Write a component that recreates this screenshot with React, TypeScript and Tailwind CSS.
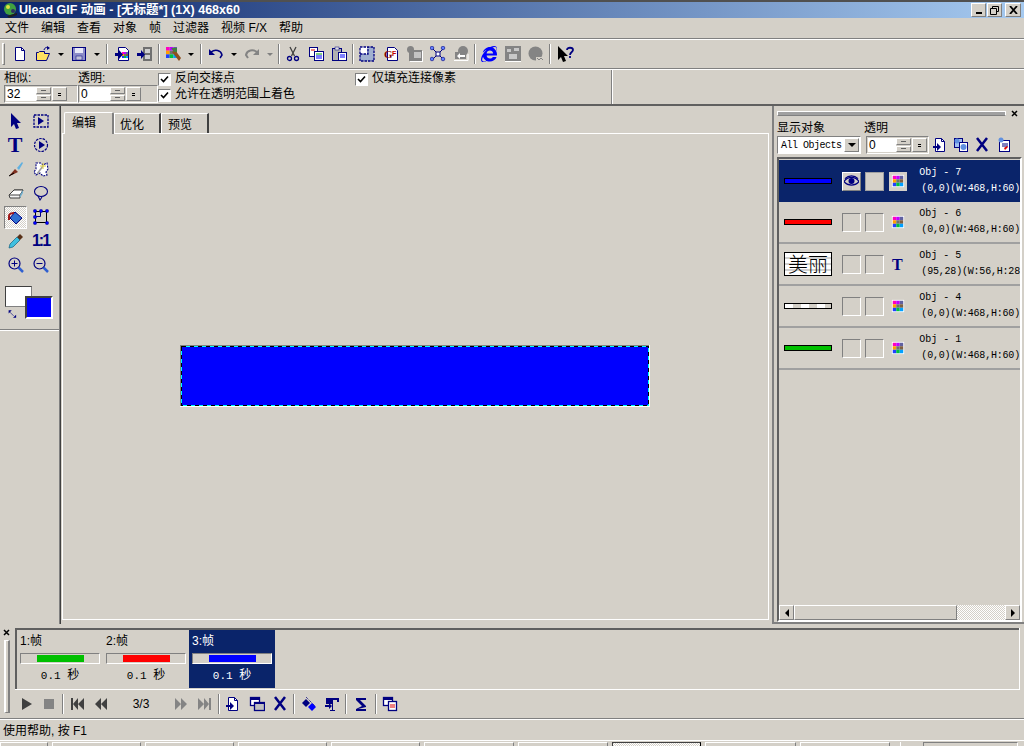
import React from "react";
import { FaInternetExplorer } from "react-icons/fa";

const FONT = "font-['Liberation_Sans','Noto_Sans_CJK_SC',sans-serif]";
const MONO = "font-['Liberation_Mono','Noto_Sans_CJK_SC',monospace]";
const RAISED = "border border-t-white border-l-white border-r-[#808080] border-b-[#808080]";
const SUNKEN = "border border-t-[#808080] border-l-[#808080] border-r-white border-b-white";
const DITHER = "bg-[repeating-conic-gradient(#ffffff_0_25%,#d4d0c8_0_50%)] bg-[length:2px_2px]";

const N = "#000080";
const B = "#0000ff";
const G = "#848484";

const Rainbow = ({ x, y, s }: { x: number; y: number; s: number }) => {
  const colors = ["#ff00c0", "#c000ff", "#6060a0", "#ffa000", "#707070", "#806040", "#2040ff", "#00c040", "#00a0ff"];
  const c = s / 3;
  return (
    <g>
      {colors.map((col, i) => (
        <rect key={i} x={x + (i % 3) * c} y={y + Math.floor(i / 3) * c} width={c} height={c} fill={col} />
      ))}
    </g>
  );
};

const page = <path d="M3.5 1.5h6l3 3v10h-9z" fill="#fff" stroke={N} />;

const ICONS: Record<string, React.ReactNode> = {
  new: (
    <>
      <path d="M3.5 1.5h6l3 3v10h-9z" fill="#fff" stroke={N} />
      <path d="M9.5 1.5v3h3" fill="none" stroke={N} />
    </>
  ),
  open: (
    <>
      <path d="M1.5 14.5v-8h2l1-1h5v2h5l-3 7z" fill="#ffe060" stroke={N} />
      <path d="M9 4c1-3 3-3 5-2" fill="none" stroke={N} />
      <path d="M12 0l3 2-3 2z" fill={N} />
    </>
  ),
  save: (
    <>
      <rect x="1.5" y="1.5" width="13" height="13" fill="#8c8cc8" stroke={N} />
      <rect x="4" y="2" width="8" height="5" fill="#e8e8f8" />
      <rect x="5" y="10" width="6" height="4" fill="#c0c0d8" stroke={N} strokeWidth=".5" />
    </>
  ),
  importImg: (
    <>
      <path d="M4.5 1.5h7l3 3v10h-10z" fill="#fff" stroke={N} />
      <Rainbow x={8} y={6} s={6} />
      <path d="M1 7h4V4l4 4.5L5 13v-3H1z" fill={N} />
    </>
  ),
  film: (
    <>
      <rect x="6" y="1" width="9" height="14" fill="#707070" />
      <rect x="8" y="3" width="5" height="4" fill="#d0d0d0" />
      <rect x="8" y="9" width="5" height="4" fill="#d0d0d0" />
      <path d="M0 7h4V4l4 4.5L4 13v-3H0z" fill={N} />
    </>
  ),
  wand: (
    <>
      <Rainbow x={1} y={1} s={11} />
      <path d="M7 6l3-2 6 8-2 3z" fill="#8c5020" />
      <path d="M6 2h6v4H9z" fill="#408040" />
    </>
  ),
  undo: (
    <>
      <path d="M3 6c4-3 10-2 11 3l-2 3" fill="none" stroke={N} strokeWidth="1.5" />
      <path d="M1 3v6h6z" fill={N} />
    </>
  ),
  redo: (
    <>
      <path d="M13 6c-4-3-10-2-11 3l2 3" fill="none" stroke={G} strokeWidth="2" />
      <path d="M15 3v6H9z" fill={G} />
    </>
  ),
  cut: (
    <>
      <path d="M5 1l4.5 9M11 1L6.5 10" stroke="#404040" strokeWidth="1.3" fill="none" />
      <circle cx="4.5" cy="12.5" r="2" fill="none" stroke={N} strokeWidth="1.3" />
      <circle cx="11.5" cy="12.5" r="2" fill="none" stroke={N} strokeWidth="1.3" />
    </>
  ),
  copy: (
    <>
      <rect x="1.5" y="1.5" width="8" height="9" fill="#fff" stroke={N} />
      <rect x="6.5" y="5.5" width="9" height="9" fill="#fff" stroke={N} />
      <path d="M3 4h4" stroke="#e00000" />
      <path d="M8 8h6" stroke="#00a000" />
      <path d="M8 10h6M8 12h6" stroke={B} />
    </>
  ),
  paste: (
    <>
      <rect x="1.5" y="2.5" width="9" height="12" fill="#b0b0b0" stroke={N} />
      <rect x="4" y="1" width="4" height="3" fill="#e0e0e0" stroke={N} strokeWidth=".5" />
      <rect x="7.5" y="6.5" width="8" height="8" fill="#fff" stroke={N} />
      <path d="M9 9h5M9 11h5" stroke={B} />
    </>
  ),
  frameTool: (
    <>
      <rect x="1" y="1" width="14" height="14" fill="#fff" />
      <rect x="8" y="1" width="7" height="7" fill="#a0b0d0" />
      <rect x="1" y="8" width="14" height="7" fill="#a0b0d0" />
      <path d="M1 1h14v14H1z M1 8h8V1" fill="none" stroke={N} strokeWidth="1.3" strokeDasharray="2.5 1" />
    </>
  ),
  gif: (
    <>
      <path d="M4.5 1.5h7l3 3v10h-10z" fill="#fff" stroke={N} />
      <text x="1" y="12" fontSize="11" fontWeight="bold" fill="#800000" fontFamily="Liberation Serif">G</text>
      <text x="9" y="10" fontSize="7" fontWeight="bold" fill="#c00000" fontFamily="Liberation Sans">F</text>
    </>
  ),
  grayBox: (
    <>
      <rect x="2" y="4" width="13" height="11" fill={G} />
      <rect x="7" y="6" width="7" height="6" fill="#c4c4c4" />
      <circle cx="3.5" cy="3.5" r="3.5" fill={G} />
      <path d="M3 15.5h13M15.5 5v11" stroke="#fff" />
    </>
  ),
  nodes: (
    <>
      <path d="M3 3l10 10M13 3L3 13" stroke={N} />
      <rect x="6" y="6" width="4" height="4" fill="#fff" stroke={N} />
      {[2, 13].map((x) =>
        [2, 13].map((y) => <circle key={`${x}-${y}`} cx={x} cy={y} r="1.8" fill="#6080ff" stroke={N} strokeWidth=".6" />)
      )}
    </>
  ),
  grayBack: (
    <>
      <circle cx="10" cy="5" r="5" fill={G} />
      <rect x="2" y="6" width="11" height="7" fill={G} />
      <path d="M1 14.5h14V8" fill="none" stroke="#fff" />
      <path d="M4 10l3-3v2h5v2H7v2z" fill="#fff" />
    </>
  ),
  grayGrid: (
    <>
      <rect x="0" y="0" width="16" height="15" fill={G} />
      <path d="M2 3h4v3H2zM9 2h5v3H9zM4 8h8v5H4z" fill="#c8c8c8" />
      <path d="M0 15.5h16" stroke="#fff" />
    </>
  ),
  grayBall: (
    <>
      <circle cx="7.5" cy="7.5" r="7" fill={G} />
      <path d="M8 11h8v4H8z" fill="#d4d0c8" />
      <path d="M9 12l2 2 2-2 2 2" fill="none" stroke={G} />
    </>
  ),
  help: (
    <>
      <path d="M0 0v14l3-3 2 5 3-1-2-5h4z" fill="#000" />
      <path d="M9 4c0-3 6-3 6 0 0 2-3 2-3 5M12 10v2" fill="none" stroke={N} strokeWidth="1.8" />
    </>
  ),
  pointer: <path d="M3 0v14l3-3 2 5 3-1-2-5h4z" fill={N} />,
  marquee: (
    <>
      <rect x="1" y="2" width="14" height="12" fill="none" stroke={N} strokeWidth="1.3" strokeDasharray="2.5 1" />
      <path d="M5 4v8l6-4z" fill={N} />
    </>
  ),
  circleSel: (
    <>
      <circle cx="8" cy="8" r="6.5" fill="none" stroke={N} strokeWidth="1.2" strokeDasharray="2.5 1" />
      <path d="M6 4v8l6-4z" fill={N} />
    </>
  ),
  brush: (
    <>
      <path d="M9 7l5-6 1 1-4 7z" fill="#60b0e0" />
      <path d="M7 8l3 3-6 3-3 1z" fill="#803020" />
      <path d="M1 15l5-3" stroke="#000" />
    </>
  ),
  magic: (
    <>
      <path d="M3 2h5l2 2 4-2 1 6-2 3 1 3-4 1-3-3-4 2-2-3 2-3z" fill="#fff" stroke={N} strokeWidth="1.1" strokeDasharray="2 1" />
      <path d="M4 13L10 5" stroke="#a0a0a0" strokeWidth="1.5" />
      <path d="M10 2v6M7 5h6" stroke="#e0d040" />
    </>
  ),
  eraser: (
    <>
      <path d="M1 10l5-5h9l-3 5v3H2z" fill="#f4f4f4" stroke="#404040" />
      <path d="M6 5h9l-3 5H1z" fill="#fff" stroke="#404040" />
      <path d="M12 10l3-5v3l-3 5z" fill="#70b0d0" />
    </>
  ),
  lasso: (
    <>
      <ellipse cx="8" cy="6.5" rx="6.5" ry="5" fill="none" stroke={N} strokeWidth="1.1" />
      <path d="M5 11l2 4 2-3" fill="none" stroke={N} strokeWidth="1.1" />
    </>
  ),
  bucket: (
    <>
      <path d="M7 3l7 6-6 6-6-6z" fill="#3070d0" stroke={N} />
      <path d="M1 11V7c0-2 3-3 5-3" fill="none" stroke="#a01818" strokeWidth="2" />
    </>
  ),
  crop: (
    <>
      <rect x="2.5" y="2.5" width="11" height="11" fill="none" stroke="#000" />
      <path d="M7.5 2v5.5M2 7.5h5.5" stroke={N} />
      {[2, 8, 14].map((x) =>
        [2, 8, 14].map((y) => (x === 8 && y === 8 ? null : (x === 14 && y === 8) || (x === 8 && y === 14) ? null : <rect key={`${x}-${y}`} x={x - 1.5} y={y - 1.5} width="3" height="3" rx="1" fill={B} stroke={N} strokeWidth=".5" />))
      )}
    </>
  ),
  dropper: (
    <>
      <path d="M1 15l1-4 7-7 3 3-7 7z" fill="#40c0e0" stroke="#106080" strokeWidth=".7" />
      <path d="M9 4l3-3 3 3-3 3z" fill="#583018" />
    </>
  ),
  zoomIn: (
    <>
      <circle cx="6.5" cy="6.5" r="5.5" fill="none" stroke={N} strokeWidth="1.2" />
      <path d="M3.5 6.5h6M6.5 3.5v6" stroke={N} />
      <path d="M10.5 10.5l4.5 4.5" stroke="#3060d0" strokeWidth="2.5" />
    </>
  ),
  zoomOut: (
    <>
      <circle cx="6.5" cy="6.5" r="5.5" fill="none" stroke={N} strokeWidth="1.2" />
      <path d="M3.5 6.5h6" stroke={N} />
      <path d="M10.5 10.5l4.5 4.5" stroke="#3060d0" strokeWidth="2.5" />
    </>
  ),
  tType: <text x="2" y="14" fontSize="16" fontWeight="bold" fill={N} fontFamily="Liberation Serif">T</text>,
  eye: (
    <>
      <path d="M0 8c4-6 12-6 16 0-4 5-12 5-16 0z" fill="#d4d0c8" stroke={N} strokeWidth="1.3" />
      <circle cx="8" cy="7.5" r="3.2" fill={N} />
      <path d="M1 5c4-4 10-4 14 0" fill="none" stroke={N} strokeWidth="1.3" />
    </>
  ),
  imgObj: (
    <>
      <rect x="1" y="1" width="14" height="14" fill="#fff" />
      <Rainbow x={2} y={2} s={12} />
    </>
  ),
  play: <path d="M4 2v12l10-6z" fill="#404040" />,
  stop: <rect x="3" y="3" width="10" height="10" fill={G} />,
  first: <path d="M2 2h2v12H2zM9 2v12L4 8zM15 2v12L9 8z" fill="#404040" />,
  prev: <path d="M8 2v12L2 8zM14 2v12L8 8z" fill="#404040" />,
  next: <path d="M2 2v12l6-6zM8 2v12l6-6z" fill={G} />,
  last: <path d="M1 2v12l6-6zM7 2v12l5-6zM12 2h2v12h-2z" fill={G} />,
  addFrame: (
    <>
      {page}
      <path d="M9.5 1.5v3h3" fill="none" stroke={N} />
      <path d="M1 9h4V6l4 4-4 4v-3H1z" fill={N} />
    </>
  ),
  dupFrame: (
    <>
      <rect x="1.5" y="1.5" width="9" height="8" fill="#fff" stroke={N} strokeWidth="1.3" />
      <path d="M1 2h10v2H1z" fill={N} />
      <rect x="5.5" y="6.5" width="10" height="8" fill="#c0c0c0" stroke={N} strokeWidth="1.3" />
      <path d="M5 6h11v2H5z" fill={N} />
    </>
  ),
  objCopy: (
    <>
      <rect x="1.5" y="1.5" width="8" height="9" fill="#a0c0f0" stroke={N} />
      <rect x="6.5" y="5.5" width="8" height="9" fill="#fff" stroke={N} />
      <circle cx="4" cy="4" r="2.5" fill="#6090e0" />
      <circle cx="10.5" cy="10" r="3" fill="#6090e0" />
    </>
  ),
  del: <path d="M3 1l10 13M13 1L3 14" stroke={N} strokeWidth="2.5" />,
  tween: (
    <>
      <path d="M5 1l9 9" stroke={N} strokeDasharray="1 1" />
      <path d="M5 3l4 4-4 4-4-4z" fill={N} />
      <path d="M11 7l4 4-4 4-4-4z" fill={B} />
    </>
  ),
  banner: (
    <>
      <path d="M2 2h13v4h-2V4H9v10h2v1H6v-1h2V8H2z" fill={N} />
      <path d="M1 9h4V7l3 3-3 3v-2H1z" fill={N} />
    </>
  ),
  sigma: <path d="M3 2h10v2H7l6 6v1l-8 2h8v2H3v-2l6-3-6-6z" fill={N} />,
  layers: (
    <>
      <rect x="1.5" y="1.5" width="9" height="8" fill="#fff" stroke={N} strokeWidth="1.3" />
      <path d="M1 2h10v2H1z" fill={N} />
      <rect x="6.5" y="5.5" width="8" height="9" fill="#fff" stroke={N} strokeWidth="1.3" />
      <path d="M8 9h5M8 11h5" stroke="#e00000" />
    </>
  ),
  ballPage: (
    <>
      <rect x="3.5" y="3.5" width="10" height="11" fill="#fff" stroke={N} />
      <circle cx="5" cy="3" r="2.5" fill="#6090e0" />
      <path d="M6 7h6M6 9h6" stroke={N} />
      <path d="M8 11l3-2 1 1-3 3z" fill="#e00000" />
    </>
  ),
  swap: (
    <>
      <path d="M3 5l6 6" stroke={N} />
      <path d="M1 7V2h5zM13 9v5H8z" fill={N} />
    </>
  ),
};

const Icon = ({ name, size = 16 }: { name: string; size?: number }) => (
  <svg width={size} height={size} viewBox="0 0 16 16" className="block shrink-0">
    {ICONS[name]}
  </svg>
);

// one toolbar cell, width comes from the reference spacing
const Btn = ({ name, w = 23 }: { name: string; w?: number }) => (
  <div className="flex justify-center items-center shrink-0" style={{ width: w }}>
    {name === "ie" ? <FaInternetExplorer size={16} color={B} /> : <Icon name={name} />}
  </div>
);

const Caret = ({ gray = false }: { gray?: boolean }) => (
  <div className="w-[13px] flex justify-center shrink-0">
    <div className={`w-0 h-0 border-x-[3px] border-x-transparent border-t-[3px] ${gray ? "border-t-[#808080]" : "border-t-black"}`} />
  </div>
);

const Sep = ({ w = 7 }: { w?: number }) => (
  <div className="flex justify-center shrink-0" style={{ width: w }}>
    <div className="w-[2px] h-[20px] border-l border-l-[#808080] border-r border-r-white" />
  </div>
);

const Spinner = ({ value, fieldW }: { value: string; fieldW: number }) => (
  <div className={`flex h-[18px] ${SUNKEN} p-px shrink-0`}>
    <div className={`bg-white text-[12px] leading-[15px] pl-px text-black ${FONT}`} style={{ width: fieldW }}>
      {value}
    </div>
    <div className="w-[15px] flex flex-col gap-px">
      <div className={`flex-1 ${RAISED} flex items-center justify-center`}>
        <div className="w-[5px] h-px bg-[#606060]" />
      </div>
      <div className={`flex-1 ${RAISED} flex items-center justify-center`}>
        <div className="w-[5px] h-px bg-[#606060]" />
      </div>
    </div>
    <div className={`w-[15px] ml-px ${RAISED} flex flex-col items-center justify-center gap-px`}>
      <div className="w-[3px] h-px bg-black" />
      <div className="w-[3px] h-px bg-black" />
    </div>
  </div>
);

const Check = ({ label }: { label: string }) => (
  <div className="flex items-center gap-[4px] h-4">
    <div className={`w-[13px] h-[13px] ${SUNKEN} bg-white flex items-center justify-center`}>
      <svg width="9" height="9" viewBox="0 0 9 9">
        <path d="M1 4l2.5 2.5L8 1.5" fill="none" stroke="#000" strokeWidth="1.6" />
      </svg>
    </div>
    <span className="text-[12px] leading-4 mt-[-2px]">{label}</span>
  </div>
);

const TOOLS: [string, string][] = [
  ["pointer", "marquee"],
  ["tText", "circleSel"],
  ["brush", "magic"],
  ["eraser", "lasso"],
  ["bucket", "crop"],
  ["dropper", "ratio"],
  ["zoomIn", "zoomOut"],
];

const Tool = ({ name }: { name: string }) => {
  if (name === "tText")
    return <span className="w-[23px] pr-px text-center text-[22px] leading-6 font-bold text-[#000080] font-['Liberation_Serif',serif]">T</span>;
  if (name === "ratio")
    return <span className="w-[23px] text-center text-[16px] leading-6 font-bold tracking-[-2px] text-[#000080] font-['Liberation_Sans',sans-serif]">1:1</span>;
  if (name === "bucket")
    return (
      <div className={`w-[23px] h-[23px] ${SUNKEN} ${DITHER} flex items-center justify-center`}>
        <Icon name={name} />
      </div>
    );
  return (
    <div className="w-[23px] h-6 flex items-center justify-center">
      <Icon name={name} />
    </div>
  );
};

const OBJECTS = [
  { id: "Obj - 7", pos: "(0,0)(W:468,H:60)", color: "#0000ff", eye: true, type: "imgObj" },
  { id: "Obj - 6", pos: "(0,0)(W:468,H:60)", color: "#ff0000", type: "imgObj" },
  { id: "Obj - 5", pos: "(95,28)(W:56,H:28", text: true, type: "tType" },
  { id: "Obj - 4", pos: "(0,0)(W:468,H:60)", color: "stripe", type: "imgObj" },
  { id: "Obj - 1", pos: "(0,0)(W:468,H:60)", color: "#00c000", type: "imgObj" },
];

type Obj = (typeof OBJECTS)[number];

const ObjRow = ({ o, active }: { o: Obj; active: boolean }) => (
  <div className={`h-[42px] shrink-0 flex items-center pl-[5px] ${active ? "bg-[#0a246a] text-white" : "border-b-2 border-b-[#a0a0a0] text-black"}`}>
    <div className="w-[48px] shrink-0 flex justify-center">
      {o.text ? (
        <div className="w-[48px] h-[24px] border border-black bg-[repeating-linear-gradient(180deg,#ffffff_0_4px,#d0d0d0_4px_6px)] flex items-center justify-center text-[20px] leading-[22px] font-light text-black font-['Noto_Sans_CJK_SC',sans-serif]">
          美丽
        </div>
      ) : o.color === "stripe" ? (
        <div className="w-[48px] h-[6px] border border-black bg-[repeating-linear-gradient(90deg,#ffffff_0_8px,#d4d0c8_8px_16px)]" />
      ) : (
        <div className="w-[48px] h-[6px] border border-black" style={{ background: o.color }} />
      )}
    </div>
    <div className={`ml-[10px] w-[20px] h-[19px] flex items-center justify-center ${o.eye ? RAISED + " bg-[#d4d0c8]" : SUNKEN}`}>
      {o.eye && <Icon name="eye" size={15} />}
    </div>
    <div className={`ml-[4px] w-[20px] h-[19px] ${o.eye ? "bg-[#d4d0c8] border border-[#a0a0a0]" : SUNKEN}`} />
    <div className={`ml-[5px] w-[20px] h-[19px] flex items-center justify-center ${o.eye ? "bg-[#d4d0c8]" : ""}`}>
      <Icon name={o.type} size={o.text ? 16 : 14} />
    </div>
    <div className={`ml-[12px] flex flex-col text-[10px] leading-4 whitespace-nowrap ${MONO}`}>
      <span className="mt-[-1px]">{o.id}</span>
      <span className="pl-[2px] tracking-[-0.2px]">{o.pos}</span>
    </div>
  </div>
);

const FRAMES = [
  { n: "1:帧", color: "#00c000" },
  { n: "2:帧", color: "#ff0000" },
  { n: "3:帧", color: "#0000ff" },
];

const Frame = ({ n, color, active }: { n: string; color: string; active: boolean }) => (
  <div className={`w-[86px] h-[58px] shrink-0 flex flex-col px-[3px] ${active ? "bg-[#0a246a] text-white" : "text-black"}`}>
    <span className="text-[12px] leading-4 mt-[3px]">{n}</span>
    <div className={`mt-[4px] h-[11px] w-[80px] ${SUNKEN} bg-[#d4d0c8] flex justify-center py-px`}>
      <div className="w-[47px]" style={{ background: color }} />
    </div>
    <span className={`text-[11px] leading-4 mt-[4px] text-center ${MONO}`}>
      0.1 <span className="text-[12px]">秒</span>
    </span>
  </div>
);

const TASKS = [48, 89, 89, 89, 89, 90, 90, 89, 91, 90];

export default function App() {
  return (
    <div className={`w-[1024px] h-[746px] overflow-hidden bg-[#d4d0c8] text-black flex flex-col ${FONT}`}>
      {/* title bar */}
      <div className="h-[18px] shrink-0 border-t-2 border-t-[#505050] bg-[linear-gradient(90deg,#0a246a,#a6caf0)] flex items-center pl-[3px]">
        <svg width="16" height="16" viewBox="0 0 16 16" className="shrink-0">
          <circle cx="7" cy="7" r="6" fill="#40a040" />
          <circle cx="5" cy="5" r="2" fill="#e0e040" />
          <circle cx="10" cy="9" r="2" fill="#303060" />
          <path d="M4 14l10-3v2l-8 3z" fill="#202020" />
        </svg>
        <span className="text-[12.5px] leading-4 font-bold text-white whitespace-nowrap">Ulead GIF 动画 - [无标题*] (1X) 468x60</span>
        <div className="ml-auto mr-[3px] flex">
          <div className={`w-[15px] h-[14px] bg-[#d4d0c8] ${RAISED} flex items-end justify-center pb-[2px]`}>
            <div className="w-[6px] h-[2px] bg-black" />
          </div>
          <div className={`w-[15px] h-[14px] ml-px bg-[#d4d0c8] ${RAISED} flex items-center justify-center`}>
            <svg width="9" height="9" viewBox="0 0 9 9">
              <path d="M2.5 2.5V.5h6v5h-2M.5 2.5h6v6h-6z" fill="none" stroke="#000" />
            </svg>
          </div>
          <div className={`w-[16px] h-[14px] ml-[3px] bg-[#d4d0c8] ${RAISED} flex items-center justify-center`}>
            <svg width="9" height="8" viewBox="0 0 9 8">
              <path d="M1 0l7 8M8 0L1 8" stroke="#000" strokeWidth="1.8" />
            </svg>
          </div>
        </div>
      </div>

      {/* menu */}
      <div className="h-[21px] shrink-0 flex items-center gap-3 pl-[5px] text-[12px] border-b border-b-[#808080]">
        {["文件", "编辑", "查看", "对象", "帧", "过滤器", "视频 F/X", "帮助"].map((m) => (
          <span key={m}>{m}</span>
        ))}
      </div>

      {/* toolbar */}
      <div className="h-[30px] shrink-0 border-t border-t-white border-b border-b-[#808080] flex items-center">
        <div className={`w-[3px] h-[22px] ml-[2px] mr-[3px] ${RAISED}`} />
        <Btn name="new" />
        <Btn name="open" />
        <Caret />
        <Btn name="save" />
        <Caret />
        <Sep />
        <Btn name="importImg" />
        <Btn name="film" />
        <Sep w={5} />
        <Btn name="wand" />
        <Caret />
        <Sep />
        <Btn name="undo" />
        <Caret />
        <Btn name="redo" />
        <Caret gray />
        <Sep w={5} />
        <Btn name="cut" />
        <Btn name="copy" />
        <Btn name="paste" />
        <Sep w={5} />
        <Btn name="frameTool" w={24} />
        <Btn name="gif" w={24} />
        <Btn name="grayBox" />
        <Btn name="nodes" />
        <Btn name="grayBack" />
        <Sep w={5} />
        <Btn name="ie" w={24} />
        <Btn name="grayGrid" />
        <Btn name="grayBall" />
        <Sep w={5} />
        <Btn name="help" w={27} />
      </div>

      {/* options bar */}
      <div className="h-[37px] shrink-0 border-t border-t-white border-b-2 border-b-[#606060] flex pl-[4px]">
        <div className="w-[74px] flex flex-col">
          <span className="text-[12px] leading-[14px] mt-[1px]">相似:</span>
          <Spinner value="32" fieldW={30} />
        </div>
        <div className="w-[80px] flex flex-col">
          <span className="text-[12px] leading-[14px] mt-[1px]">透明:</span>
          <Spinner value="0" fieldW={30} />
        </div>
        <div className="w-[197px] flex flex-col pt-[1px]">
          <Check label="反向交接点" />
          <Check label="允许在透明范围上着色" />
        </div>
        <div className="w-[256px] pt-[1px]">
          <Check label="仅填充连接像素" />
        </div>
        <div className="w-[2px] border-l border-l-[#808080] border-r border-r-white" />
      </div>

      {/* main */}
      <div className="h-[518px] shrink-0 flex">
        {/* tool column */}
        <div className="w-[62px] shrink-0 flex">
          <div className="w-[59px] flex flex-col">
            <div className="h-[224px] border-b border-b-[#808080] flex flex-col pt-[3px] items-start">
              {TOOLS.map(([a, b]) => (
                <div key={a} className="flex h-6 items-center pl-[4px] gap-[2px]">
                  <Tool name={a} />
                  <Tool name={b} />
                </div>
              ))}
              <div className="relative ml-[5px] mt-[9px] w-[48px] h-[33px]">
                <div className="w-[27px] h-[21px] bg-white border border-t-[#404040] border-l-[#404040] border-r-[#808080] border-b-[#808080]" />
                <div className="absolute left-[20px] top-[10px] w-[28px] h-[23px] bg-[#0000ff] border-2 border-t-[#404040] border-l-[#404040] border-r-white border-b-white" />
                <div className="absolute left-[3px] top-[23px]">
                  <Icon name="swap" size={10} />
                </div>
              </div>
            </div>
            <div className="h-px bg-white" />
          </div>
          <div className="w-[2px] bg-[#808080] border-r border-r-[#404040]" />
        </div>

        {/* canvas + tabs */}
        <div className="w-[707px] shrink-0 flex flex-col">
          <div className="h-[27px] shrink-0 flex items-end pl-[2px] relative">
            <div className="w-[50px] h-[22px] mb-[-1px] z-10 bg-[#d4d0c8] border-t border-l border-white border-r-2 border-r-[#808080] text-[12px] leading-5 pl-[7px] rounded-t-[2px]">编辑</div>
            <div className="w-[47px] h-[20px] border-t border-l border-white border-r-2 border-r-[#404040] text-[12px] leading-5 pt-px pl-[5px]">优化</div>
            <div className="w-[48px] h-[20px] border-t border-l border-white border-r-2 border-r-[#404040] text-[12px] leading-5 pt-px pl-[6px]">预览</div>
          </div>
          <div className="flex-1 mb-[4px] pr-px pb-[2px] border border-white flex items-center justify-center">
            <svg width="470" height="62" viewBox="0 0 470 62" className="block" shapeRendering="crispEdges">
              <path d="M0 61V0h470" fill="none" stroke="#808080" />
              <path d="M0 61.5h470M469.5 0v62" stroke="#fff" />
              <rect x="1.5" y="1.5" width="467" height="59" fill="#0000ff" stroke="#00ffff" />
              <rect x="1.5" y="1.5" width="467" height="59" fill="none" stroke="#000" strokeDasharray="4 4" />
            </svg>
          </div>
        </div>

        {/* object panel */}
        <div className="w-[3px] shrink-0" />
        <div className="flex-1 min-w-0 border-l-2 border-l-[#808080] border-b-2 border-b-[#808080] flex flex-col pl-[3px] pr-[1px]">
          <div className="h-[15px] shrink-0 flex items-center">
            <div className="w-[229px] h-[5px] border border-t-white border-l-white border-r-white border-b-[#808080] bg-[#a0a0a0]" />
            <svg width="7" height="7" viewBox="0 0 7 7" className="ml-[5px]">
              <path d="M1 1l5 5M6 1L1 6" stroke="#000" strokeWidth="1.5" />
            </svg>
          </div>
          <div className="h-[14px] shrink-0 flex text-[12px] leading-[14px]">
            <span className="w-[87px]">显示对象</span>
            <span>透明</span>
          </div>
          <div className="h-[20px] shrink-0 flex items-center">
            <div className={`w-[84px] h-[18px] ${SUNKEN} bg-white flex p-px`}>
              <span className={`flex-1 whitespace-nowrap text-[10px] leading-[15px] pl-[2px] tracking-[-0.5px] ${MONO}`}>All Objects</span>
              <div className={`w-[15px] bg-[#d4d0c8] ${RAISED} flex items-center justify-center`}>
                <div className="w-0 h-0 border-x-[4px] border-x-transparent border-t-[4px] border-t-black" />
              </div>
            </div>
            <div className="ml-[5px]">
              <Spinner value="0" fieldW={28} />
            </div>
            <div className="flex">
              <Btn name="addFrame" w={21} />
              <Btn name="objCopy" w={22} />
              <Btn name="del" w={20} />
              <Btn name="ballPage" w={23} />
            </div>
          </div>
          <div className="flex-1 min-h-0 mt-[2px] mr-px border-2 border-t-[#606060] border-l-[#606060] border-r-white border-b-white flex flex-col">
            <div className="h-px shrink-0" />
            <div className="flex-1 min-h-0 flex flex-col overflow-hidden">
              {OBJECTS.map((o, i) => (
                <ObjRow key={o.id} o={o} active={i === 0} />
              ))}
            </div>
            <div className="h-[15px] shrink-0 flex">
              <div className={`w-[15px] ${RAISED} flex items-center justify-center`}>
                <div className="w-0 h-0 border-y-[4px] border-y-transparent border-r-[4px] border-r-black" />
              </div>
              <div className={`w-[163px] ${RAISED}`} />
              <div className={`flex-1 ${DITHER}`} />
              <div className={`w-[15px] ${RAISED} flex items-center justify-center`}>
                <div className="w-0 h-0 border-y-[4px] border-y-transparent border-l-[4px] border-l-black" />
              </div>
            </div>
          </div>
        </div>
      </div>

      {/* frame panel */}
      <div className="h-[90px] shrink-0 mt-[4px] flex">
        <div className="w-[15px] shrink-0 flex flex-col items-center pr-[2px]">
          <svg width="7" height="7" viewBox="0 0 7 7" className="mt-[1px]">
            <path d="M1 1l5 5M6 1L1 6" stroke="#000" strokeWidth="1.5" />
          </svg>
          <div className={`mt-[4px] w-[6px] h-[73px] ${RAISED} bg-[#d4d0c8] border-x-2`} />
        </div>
        <div className="w-[1005px] flex flex-col">
          <div className="h-[61px] shrink-0 border-2 border-t-[#606060] border-l-[#606060] border-r-0 border-b-0 relative">
            <div className="flex">
              {FRAMES.map((f, i) => (
                <Frame key={f.n} n={f.n} color={f.color} active={i === 2} />
              ))}
            </div>
            <div className="absolute left-[-2px] right-0 bottom-[-1px] h-px bg-white" />
            <div className="absolute right-0 top-[-2px] bottom-0 w-px bg-white" />
          </div>
          <div className="flex-1 flex items-center">
            <Btn name="play" w={22} />
            <Btn name="stop" w={23} />
            <Sep w={5} />
            <Btn name="first" w={24} />
            <Btn name="prev" w={24} />
            <span className={`w-[56px] text-center text-[12px] ${FONT}`}>3/3</span>
            <Btn name="next" w={24} />
            <Btn name="last" w={23} />
            <Sep w={5} />
            <Btn name="addFrame" w={24} />
            <Btn name="dupFrame" w={23} />
            <Btn name="del" w={23} />
            <Sep w={6} />
            <Btn name="tween" w={24} />
            <Btn name="banner" w={21} />
            <Sep w={7} />
            <Btn name="sigma" w={24} />
            <Sep w={5} />
            <Btn name="layers" w={24} />
          </div>
        </div>
      </div>

      {/* status */}
      <div className="h-[23px] shrink-0 border-t border-t-[#808080] border-b border-b-white">
        <div className="border-t border-t-white h-[20px] pl-[3px] text-[12px] leading-[22px]">使用帮助, 按 F1</div>
      </div>

      {/* task strip */}
      <div className="flex-1 flex pt-px gap-[4px]">
        {TASKS.map((w, i) => (
          <div
            key={i}
            className={`h-6 shrink-0 ${i === 7 ? `${DITHER} border border-t-[#404040] border-l-[#404040]` : RAISED}`}
            style={{ width: w }}
          />
        ))}
        <div className="ml-[6px] w-px h-3 bg-white shrink-0" />
        <div className={`ml-[18px] w-[95px] h-6 shrink-0 ${SUNKEN}`} />
      </div>
    </div>
  );
}
